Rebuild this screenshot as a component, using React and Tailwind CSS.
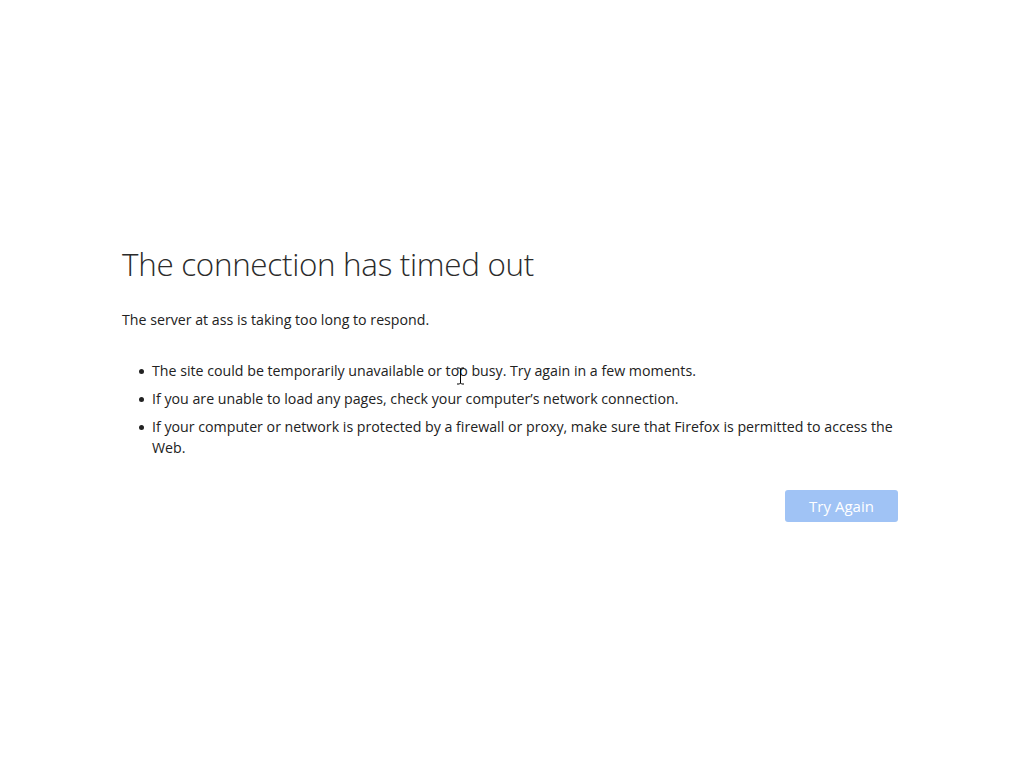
export default function App() {
  const bullets = [
    'The site could be temporarily unavailable or too busy. Try again in a few moments.',
    'If you are unable to load any pages, check your computer\u2019s network connection.',
    'If your computer or network is protected by a firewall or proxy, make sure that Firefox is permitted to access the Web.',
  ]

  return (
    <div className="relative min-h-[768px] w-full bg-white text-[#222] font-['Open_Sans','Noto_Sans',sans-serif]">
      <div className="pl-[122px] pt-[240px] w-[898px]">
        <h1 className="text-[31.4px] font-light leading-[48px] text-[#2b2b2b] tracking-[-0.3px]">
          The connection has timed out
        </h1>
        <p className="mt-[22px] text-[14.2px] leading-[20px]">
          The server at ass is taking too long to respond.
        </p>
        <ul className="mt-[30px] space-y-[7px] text-[14.2px] leading-[21px]">
          {bullets.map((b) => (
            <li key={b} className="flex">
              <span className="w-[30px] shrink-0 flex justify-end pr-[8px] pt-[9px]">
                <span className="block h-[5px] w-[5px] rounded-full bg-[#222]" />
              </span>
              <span>{b}</span>
            </li>
          ))}
        </ul>
        <div className="mt-[32px] flex justify-end">
          <button className="h-[32px] w-[113px] rounded-[3px] bg-[#a0c3f5] text-[15px] text-white">
            Try Again
          </button>
        </div>
      </div>
      {/* text cursor */}
      <svg className="absolute left-[456px] top-[367px]" width="9" height="18" viewBox="0 0 9 18">
        <path d="M1 1h2.5l1 1 1-1H8M4.5 2v14M1 17h2.5l1-1 1 1H8" stroke="#000" strokeWidth="1" fill="none" />
      </svg>
    </div>
  )
}
